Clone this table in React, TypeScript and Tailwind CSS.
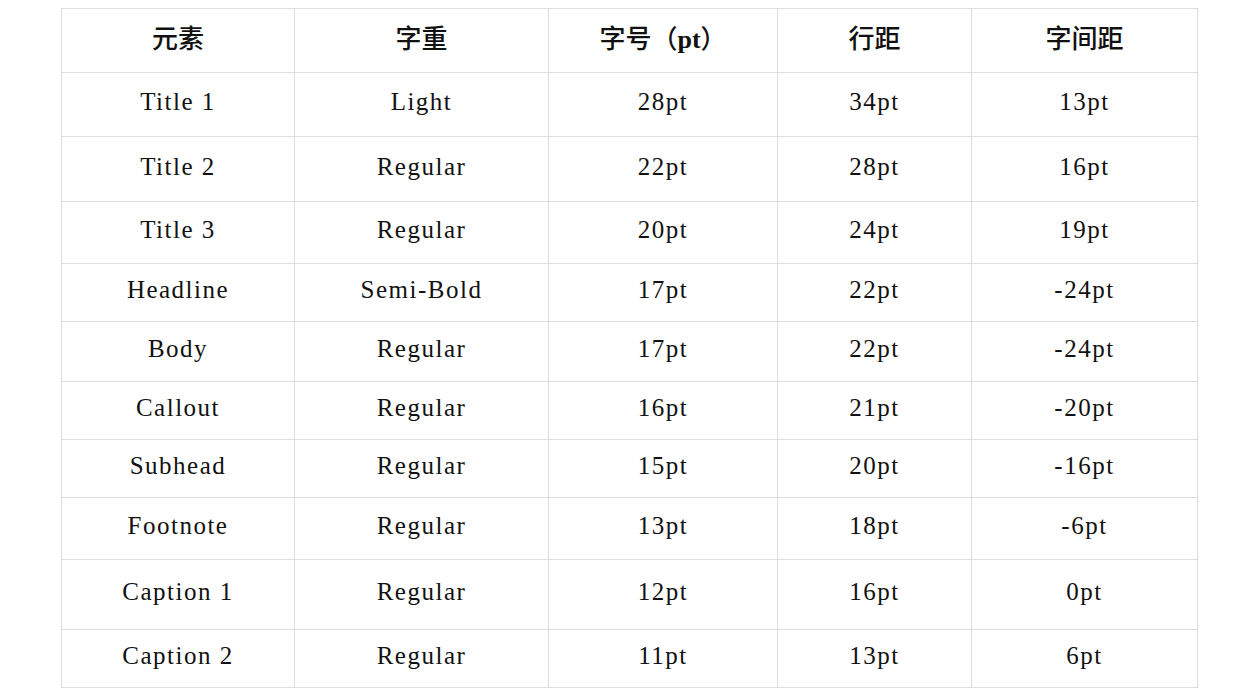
import React from "react";

const cols = ["w-[233px]", "w-[254px]", "w-[229px]", "w-[194px]", "w-[226px]"];

const rows: { h: string; cells: string[] }[] = [
  { h: "h-[64px]", cells: ["Title 1", "Light", "28pt", "34pt", "13pt"] },
  { h: "h-[65px]", cells: ["Title 2", "Regular", "22pt", "28pt", "16pt"] },
  { h: "h-[62px]", cells: ["Title 3", "Regular", "20pt", "24pt", "19pt"] },
  { h: "h-[58px]", cells: ["Headline", "Semi-Bold", "17pt", "22pt", "-24pt"] },
  { h: "h-[60px]", cells: ["Body", "Regular", "17pt", "22pt", "-24pt"] },
  { h: "h-[58px]", cells: ["Callout", "Regular", "16pt", "21pt", "-20pt"] },
  { h: "h-[58px]", cells: ["Subhead", "Regular", "15pt", "20pt", "-16pt"] },
  { h: "h-[62px]", cells: ["Footnote", "Regular", "13pt", "18pt", "-6pt"] },
  { h: "h-[70px]", cells: ["Caption 1", "Regular", "12pt", "16pt", "0pt"] },
  { h: "h-[58px]", cells: ["Caption 2", "Regular", "11pt", "13pt", "6pt"] },
];

export default function App() {
  const header: React.ReactNode[] = [
    "元素",
    "字重",
    <>
      字号（<span className="font-bold">pt</span>）
    </>,
    "行距",
    "字间距",
  ];
  return (
    <div className="w-[1258px] h-[700px] bg-white pt-[8px] pl-[61px] font-['Liberation_Serif','Noto_Sans_CJK_SC',serif] text-[#111]">
      <div className="w-[1137px] border-r border-b border-[#dddddd]">
        <div className="flex h-[64px]">
          {header.map((t, i) => (
            <div
              key={i}
              className={`${cols[i]} border-l border-t border-[#dddddd] flex items-center justify-center pb-[3px] text-[26px] font-medium`}
            >
              {t}
            </div>
          ))}
        </div>
        {rows.map((r, ri) => (
          <div key={ri} className={`flex ${r.h}`}>
            {r.cells.map((t, i) => (
              <div
                key={i}
                className={`${cols[i]} border-l border-t border-[#dddddd] flex items-center justify-center pb-[5px] text-[25px] tracking-[1.5px]`}
              >
                {t}
              </div>
            ))}
          </div>
        ))}
      </div>
    </div>
  );
}
